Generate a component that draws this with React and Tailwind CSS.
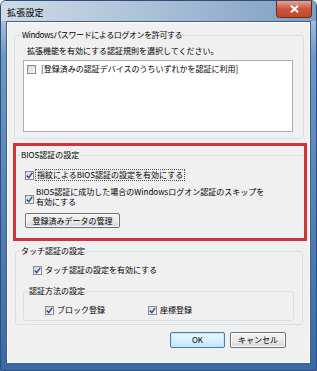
import React from "react";

function Check({ checked }) {
  return (
    <span className="w-[9px] h-[9px] shrink-0 border border-[#8a8c8f] bg-gradient-to-br from-[#d4d6d9] to-[#fafafa] flex items-center justify-center">
      {checked && (
        <svg width="7" height="7" viewBox="0 0 7 7">
          <path d="M0.8 3.6 L2.8 5.6 L6.2 0.9" stroke="#2f4f94" strokeWidth="1.5" fill="none" />
        </svg>
      )}
    </span>
  );
}

function WinButton({ children, def, className }) {
  return (
    <div
      className={
        "flex items-center justify-center rounded-[2px] text-[8px] leading-[10px] " +
        (def
          ? "border border-[#3c7fb1] bg-gradient-to-b from-[#eaf6fd] via-[#d9f0fc] to-[#bee6fd] shadow-[inset_0_0_0_1px_#c6e6f8] "
          : "border border-[#707070] bg-gradient-to-b from-[#f2f2f2] via-[#ebebeb] to-[#d5d5d5] shadow-[inset_0_0_0_1px_#fcfcfc] ") +
        className
      }
    >
      {children}
    </div>
  );
}

export default function App() {
  return (
    <div className="w-[317px] h-[371px] font-['Noto_Sans_CJK_JP',sans-serif] text-black">
      <div className="w-full h-full flex flex-col rounded-t-[6px] border border-[#2d4f7c] bg-gradient-to-b from-[#c4d3e3] via-[#6d97c7] via-[15%] to-[#3a6aa5] overflow-hidden">
        {/* Title bar */}
        <div className="h-[20px] flex items-start justify-between bg-gradient-to-r from-[#cfdbe7] via-[#a9bfd6] to-[#7f9dc1]">
          <div className="pl-[6px] pt-[6px] text-[9px] leading-[11px] tracking-[0.2px]">拡張設定</div>
          <div className="mr-[4px] w-[36px] h-[17px] rounded-b-[4px] border border-t-0 border-[#6b2a1c] bg-gradient-to-b from-[#e7a391] via-[#c8553c] to-[#c2492a] flex items-center justify-center">
            <svg width="9" height="8" viewBox="0 0 9 8">
              <path d="M1 0.8 L8 7.2 M8 0.8 L1 7.2" stroke="#ffffff" strokeWidth="2" />
            </svg>
          </div>
        </div>
        {/* Client */}
        <div className="ml-[5px] mr-[5px] h-[343px] border border-[#3f5f88] bg-[#f0f0f0] flex flex-col text-[8px] leading-[10px] shadow-[inset_0_0_0_1px_#ffffff]">
          {/* Group 1 */}
          <fieldset className="mt-[8px] ml-[7px] mr-[6px] border border-[#d5dfe5] rounded-[3px] pb-[6px]">
            <legend className="ml-[6px] px-[1px] text-[8px] leading-[10px] tracking-[-0.4px]">
              Windowsパスワードによるログオンを許可する
            </legend>
            <div className="mt-[6px] pl-[12px]">拡張機能を有効にする認証規則を選択してください。</div>
            <div className="mt-[4px] ml-[8px] w-[270px] h-[72px] border border-[#abadb3] bg-white">
              <div className="pt-[3px] pl-[3px] flex items-center gap-[5px]">
                <Check checked={false} />
                <span>[登録済みの認証デバイスのうちいずれかを認証に利用]</span>
              </div>
            </div>
          </fieldset>

          {/* Red highlight box */}
          <div className="mt-[4px] ml-[6px] w-[294px] h-[98px] border-[3px] border-[#d2323d] flex flex-col">
            <fieldset className="mt-[4px] border-t border-[#d5dfe5]">
              <legend className="ml-[4px] px-[1px] text-[8px] leading-[10px]">BIOS認証の設定</legend>
              <div className="mt-[9px] pl-[9px] flex items-center gap-[1px]">
                <Check checked />
                <span className="border border-dotted border-[#555] px-[1px] leading-[10px]">
                  指紋によるBIOS認証の設定を有効にする
                </span>
              </div>
              <div className="mt-[6px] pl-[9px] flex items-center gap-[2px]">
                <span className="pt-[4px]">
                  <Check checked />
                </span>
                <div className="flex flex-col">
                  <span>BIOS認証に成功した場合のWindowsログオン認証のスキップを</span>
                  <span>有効にする</span>
                </div>
              </div>
              <WinButton className="mt-[6px] ml-[9px] w-[95px] h-[15px]">登録済みデータの管理</WinButton>
            </fieldset>
          </div>

          {/* Touch group */}
          <fieldset className="mt-[5px] ml-[8px] mr-[7px] border border-[#d5dfe5] rounded-[3px] pb-[3px]">
            <legend className="ml-[4px] px-[1px] text-[8px] leading-[10px]">タッチ認証の設定</legend>
            <div className="mt-[9px] pl-[17px] flex items-center gap-[3px]">
              <Check checked />
              <span>タッチ認証の設定を有効にする</span>
            </div>
            <fieldset className="mt-[11px] ml-[7px] w-[271px] border border-[#d5dfe5] rounded-[3px] pb-[5px]">
              <legend className="ml-[4px] px-[1px] text-[8px] leading-[10px]">認証方法の設定</legend>
              <div className="mt-[9px] pl-[21px] flex items-center">
                <div className="w-[103px] flex items-center gap-[3px]">
                  <Check checked />
                  <span>ブロック登録</span>
                </div>
                <div className="flex items-center gap-[3px]">
                  <Check checked />
                  <span>座標登録</span>
                </div>
              </div>
            </fieldset>
          </fieldset>

          {/* Buttons */}
          <div className="mt-[7px] mr-[24px] flex justify-end gap-[5px]">
            <WinButton def className="w-[55px] h-[16px]">OK</WinButton>
            <WinButton className="w-[56px] h-[16px]">キャンセル</WinButton>
          </div>
        </div>
      </div>
    </div>
  );
}
